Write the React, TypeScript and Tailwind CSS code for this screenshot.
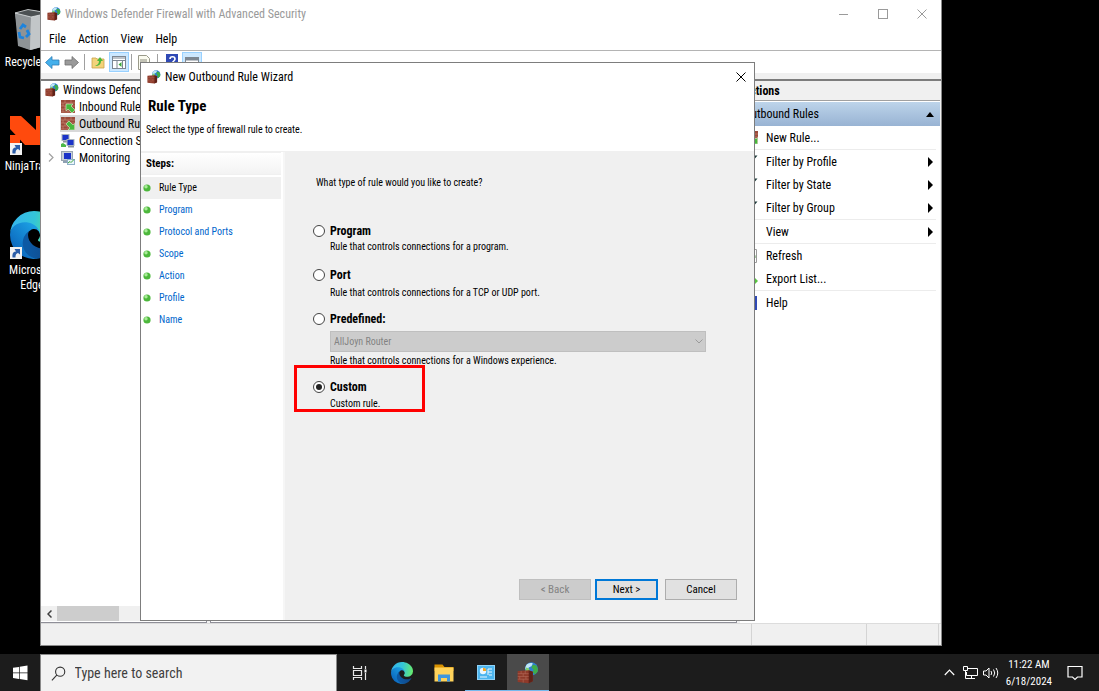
// App.tsx — Windows desktop with the firewall console and the outbound rule wizard
// Console window, wizard dialog and taskbar, each built from small pieces below

import React, { useState } from 'react'

// --- Data ---

const steps = ['Rule Type', 'Program', 'Protocol and Ports', 'Scope', 'Action', 'Profile', 'Name']

const menus = ['File', 'Action', 'View', 'Help']

type RuleKind = 'program' | 'port' | 'predefined' | 'custom'

// --- Icons ---

function FirewallIcon({ className = 'size-4' }: { className?: string }) {
  return (
    <svg viewBox="0 0 32 32" className={className} aria-hidden="true">
      <circle cx="21" cy="10" r="9.5" fill="#2f7fd0" />
      <path d="M15 3c3-2 6-2 8-1l-2 4-4 2-1 4-4-2c0-3 1-5 3-7z" fill="#bfe6f5" />
      <path d="M23 4l5 1c2 3 3 6 2 9l-4 4-3-3 1-4-3-3z" fill="#3fae49" />
      <path d="M13 8l4 1 2 4-3 4-4-3z" fill="#7fd06a" />
      <path d="M1 13l16-1 6 2v14l-6 3L1 29z" fill="#8f3a2a" />
      <path d="M17 12l6 2v14l-6 3z" fill="#5f2218" />
      <path d="M1 17h16M1 21h16M1 25h16M6 13v4M12 13v4M9 17v4M4 21v4M13 21v4M9 25v5" stroke="#b5705f" strokeWidth="0.8" fill="none" />
    </svg>
  )
}

function BrickRuleIcon({ direction }: { direction: 'in' | 'out' }) {
  return (
    <svg viewBox="0 0 14 13" className="w-[14px] h-[13px] shrink-0" aria-hidden="true">
      <rect width="14" height="13" fill="#9a4a3a" />
      <path d="M0 3h14M0 6h14M0 9h14M0 12h14M4 0v3M10 0v3M2 3v3M7 3v3M4 6v3M2 9v3M7 9v3" stroke="#c98a7a" strokeWidth="0.6" />
      {direction === 'in' ? (
        <path d="M5 4h7l-2 2 4 4-3 3-4-4-2 2z" fill="#47b83c" stroke="#d8f5cf" strokeWidth="0.6" />
      ) : (
        <path d="M13.500 13H7l2-2-4-4 3-3 4 4 1.500-1.500z" fill="#47b83c" stroke="#d8f5cf" strokeWidth="0.6" />
      )}
    </svg>
  )
}

function ComputersIcon() {
  return (
    <svg viewBox="0 0 14 14" className="size-[14px] shrink-0" aria-hidden="true">
      <rect x="1" y="0.5" width="7" height="6" fill="#1b34c8" stroke="#a9b3bd" />
      <rect x="2" y="7" width="5" height="1.5" fill="#8a949d" />
      <rect x="6" y="5.5" width="7" height="6" fill="#1b34c8" stroke="#a9b3bd" />
      <rect x="7" y="12" width="6" height="1.5" fill="#8a949d" />
      <path d="M0 13v-3l2-1 3 2v2z" fill="#4db848" />
    </svg>
  )
}

function MonitorIcon() {
  return (
    <svg viewBox="0 0 14 14" className="size-[14px] shrink-0" aria-hidden="true">
      <rect x="0.5" y="0.5" width="11" height="9" fill="#c6d0da" stroke="#9aa6b2" />
      <rect x="3" y="2" width="7" height="6" fill="#1b34c8" />
      <rect x="2" y="10" width="8" height="2" fill="#8fa0b3" />
      <rect x="6.5" y="8.5" width="7" height="5" fill="#eaf4fb" stroke="#8fb0c8" />
      <path d="M7 12l2-1.500 1 1 3-3" stroke="#3ba53a" fill="none" />
    </svg>
  )
}

function EdgeIcon({ id, className }: { id: string; className: string }) {
  return (
    <svg viewBox="0 0 256 256" className={className} aria-hidden="true">
      <defs>
        <linearGradient id={`${id}-a`} x1="0.2" y1="0.5" x2="0.9" y2="0.5">
          <stop offset="0" stopColor="#0c59a4" />
          <stop offset="1" stopColor="#114a8b" />
        </linearGradient>
        <linearGradient id={`${id}-b`} x1="0.9" y1="0.3" x2="0.3" y2="1">
          <stop offset="0" stopColor="#1b9de2" />
          <stop offset="1" stopColor="#0a63ba" />
        </linearGradient>
        <linearGradient id={`${id}-c`} x1="0" y1="0.4" x2="1" y2="0.5">
          <stop offset="0" stopColor="#35b4ee" />
          <stop offset="0.5" stopColor="#34c5d8" />
          <stop offset="1" stopColor="#66eb6e" />
        </linearGradient>
      </defs>
      <path fill={`url(#${id}-a)`} d="M231 190.500a93.700 93.700 0 0 1-10.500 4.700 101.900 101.900 0 0 1-35.900 6.500c-47.300 0-88.500-32.600-88.500-74.300a31.500 31.500 0 0 1 16.400-27.300c-42.800 1.800-53.800 46.400-53.800 72.500 0 74 68.100 81.400 82.800 81.400 7.900 0 19.800-2.300 27-4.600l1.300-.4a128.300 128.300 0 0 0 66.600-52.800 4 4 0 0 0-5.400-5.700z" />
      <path fill={`url(#${id}-b)`} d="M105.700 241.400a79.200 79.200 0 0 1-22.700-21.300 80.700 80.700 0 0 1 29.500-120c3.200-1.500 8.500-4.100 15.600-4a32.400 32.400 0 0 1 25.700 13 31.900 31.900 0 0 1 6.300 18.700c0-.2 24.500-79.600-80-79.600-43.900 0-80 41.700-80 78.200a130.200 130.200 0 0 0 12.100 56 128 128 0 0 0 156.400 67 75.500 75.500 0 0 1-62.800-8z" />
      <path fill={`url(#${id}-c)`} d="M152.300 148.900c-.9 1-3.400 2.500-3.400 5.600 0 2.600 1.700 5.200 4.800 7.300 14.300 10 41.400 8.600 41.500 8.600a59.600 59.600 0 0 0 30.300-8.300 61.400 61.400 0 0 0 30.400-52.900c.3-22.400-8-37.300-11.300-43.900C223.500 23.900 177.700 0 128 0A128 128 0 0 0 0 126.200c.5-36.500 36.800-66 80-66 3.500 0 23.500.3 42 10 16.300 8.600 24.900 18.900 30.800 29.200 6.200 10.700 7.300 24.100 7.300 29.500 0 5.300-2.700 13.300-7.800 20z" />
    </svg>
  )
}

function RecycleBinIcon() {
  return (
    <svg viewBox="0 0 36 42" className="h-[42px] w-9" aria-hidden="true">
      <path d="M1 4l17-3 17 3-4 33-14 4-11-4z" fill="#a8adb0" />
      <path d="M1 4l16 4-1 33-12-4z" fill="#8e9396" />
      <path d="M17 8l18-4-4 33-15 4z" fill="#c2c6c8" />
      <path d="M1 4l13-3.500L35 4l-18 4z" fill="#4c5153" stroke="#dfe3e5" strokeWidth="0.8" />
      <path d="M6 20l3-4 3 2M5 23l1 5 4 1M12 28l3-3-2-4" stroke="#1d83dc" strokeWidth="2.800" fill="none" />
    </svg>
  )
}

function NinjaIcon() {
  return (
    <svg viewBox="0 0 44 40" className="h-10 w-11" aria-hidden="true">
      <path d="M0 1h11l15 14V1h14v29H15L0 14z" fill="#ff4a0d" />
      <path d="M0 20h7l3 3v7H0z" fill="#ff4a0d" />
    </svg>
  )
}

function ShortcutArrow() {
  return (
    <svg viewBox="0 0 12 12" className="absolute bottom-0 left-0 size-3" aria-hidden="true">
      <rect width="12" height="12" fill="#f2f2f2" />
      <path d="M2.500 10.500C2 6 3.500 4.500 6 4.500L4.500 2H10v5.500L8 6C6 6.500 5.500 8 5.500 10.500z" fill="#2b5da8" />
    </svg>
  )
}

function ArrowIcon({ flip = false, fill }: { flip?: boolean; fill: string }) {
  return (
    <svg viewBox="0 0 15 13" className="h-[13px] w-[15px]" aria-hidden="true">
      <path
        d={flip ? 'M14.500 6.500L8 0.500v3.500H1v5h7v3.500z' : 'M0.500 6.500L7 0.500v3.500h7v5H7v3.500z'}
        fill={fill}
        stroke={flip ? '#6f6f6f' : '#2d7fb8'}
        strokeWidth="0.8"
      />
    </svg>
  )
}

function CloseIcon({ className }: { className: string }) {
  return (
    <svg viewBox="0 0 10 10" className={className} aria-hidden="true">
      <path d="M0.500 0.500l9 9M9.500 0.500l-9 9" stroke="currentColor" fill="none" />
    </svg>
  )
}

// --- Desktop ---

function DesktopIcon({ label, children }: { label: string; children: React.ReactNode }) {
  return (
    <button className="flex w-16 flex-col items-center gap-1 text-[12px] leading-[15px] text-white">
      <span className="relative flex h-12 w-full items-end justify-center">{children}</span>
      <span className="px-1">{label}</span>
    </button>
  )
}

function Desktop() {
  return (
    <div className="flex flex-col items-start gap-[37px] pt-[3px]">
      <DesktopIcon label="Recycle Bin">
        <RecycleBinIcon />
      </DesktopIcon>
      <DesktopIcon label="NinjaTrader">
        <span className="relative">
          <NinjaIcon />
          <ShortcutArrow />
        </span>
      </DesktopIcon>
      <DesktopIcon label="Microsoft Edge">
        <span className="relative ml-1">
          <EdgeIcon id="desk" className="size-12" />
          <ShortcutArrow />
        </span>
      </DesktopIcon>
    </div>
  )
}

// --- Console window ---

function Toolbar() {
  return (
    <div className="flex h-[22px] items-center pl-1">
      <button aria-label="Back"><ArrowIcon fill="#44b0ec" /></button>
      <button aria-label="Forward" className="ml-1"><ArrowIcon flip fill="#9a9a9a" /></button>
      <span className="ml-[5px] h-4 w-px bg-[#a0a0a0]" />
      <button aria-label="Up one level" className="ml-[6px]">
        <svg viewBox="0 0 14 14" className="size-[14px]" aria-hidden="true">
          <path d="M1 3h4l1 1h7v9H1z" fill="#f3d37a" stroke="#c9a24a" strokeWidth="0.8" />
          <path d="M4 11c3-1 4-3 4-5H6l3-4 3 4h-2c0 3-2 5-6 5z" fill="#4bb83a" />
        </svg>
      </button>
      <button aria-label="Show or hide console tree" className="ml-1 flex h-5 w-5 items-center justify-center border border-[#99d1ff] bg-[#cce8ff]">
        <svg viewBox="0 0 14 13" className="h-[13px] w-[14px]" aria-hidden="true">
          <rect x="0.500" y="0.500" width="13" height="12" fill="#fff" stroke="#7d8792" />
          <path d="M1 2h12M1 4.500h12M5 5v7M10.500 5v7" stroke="#7d8792" />
          <path d="M9.500 6v5L6.500 8.500z" fill="#3aa83a" />
        </svg>
      </button>
      <span className="ml-[2px] h-4 w-px bg-[#a0a0a0]" />
      <button aria-label="Export" className="ml-[6px]">
        <svg viewBox="0 0 12 15" className="h-[15px] w-3" aria-hidden="true">
          <path d="M0.500 0.500h8l3 3v11h-11z" fill="#fbfbf0" stroke="#9a9a8a" />
          <path d="M2 5h7M2 7h7M2 9h7" stroke="#8a8a7a" />
        </svg>
      </button>
      <span className="ml-[7px] h-4 w-px bg-[#a0a0a0]" />
      <button aria-label="Help" className="ml-2">
        <svg viewBox="0 0 12 16" className="h-4 w-3" aria-hidden="true">
          <rect width="12" height="16" fill="#2f49b5" />
          <path d="M4 5c0-3 5-3 5 0 0 2-2.500 2-2.500 4M6.500 11v2" stroke="#fff" strokeWidth="1.600" fill="none" />
        </svg>
      </button>
      <button aria-label="Show or hide action pane" className="ml-1 flex h-5 w-5 items-center justify-center border border-[#99d1ff] bg-[#cce8ff]">
        <svg viewBox="0 0 14 10" className="h-[10px] w-[14px]" aria-hidden="true">
          <rect x="0.500" y="0.500" width="13" height="9" fill="#fff" stroke="#7d8792" />
          <path d="M1 2h12" stroke="#7d8792" strokeWidth="3" />
        </svg>
      </button>
    </div>
  )
}

function TreeItem({ icon, label, selected = false, expandable = false }: { icon: React.ReactNode; label: string; selected?: boolean; expandable?: boolean }) {
  return (
    <li className="flex h-[17px] items-center">
      <span className="flex w-[19px] shrink-0 justify-center">
        {expandable && (
          <svg viewBox="0 0 6 9" className="h-[9px] w-[6px]" aria-hidden="true">
            <path d="M1 0.500l4 4-4 4" stroke="#a0a0a0" strokeWidth="1.200" fill="none" />
          </svg>
        )}
      </span>
      <button className={`flex h-full flex-1 items-center gap-1 whitespace-nowrap pl-px ${selected ? 'bg-[#d9d9d9]' : ''}`}>
        {icon}
        {label}
      </button>
    </li>
  )
}

function ConsoleTree() {
  return (
    <nav className="flex w-[166px] shrink-0 flex-col overflow-hidden border-r border-b border-[#8f8f98] bg-white" aria-label="Console tree">
      <button className="flex h-[17px] items-center gap-1 pl-1 whitespace-nowrap">
        <FirewallIcon className="size-[14px] shrink-0" />
        Windows Defender Firewall
      </button>
      <ul className="flex-1">
        <TreeItem icon={<BrickRuleIcon direction="in" />} label="Inbound Rules" />
        <TreeItem icon={<BrickRuleIcon direction="out" />} label="Outbound Rules" selected />
        <TreeItem icon={<ComputersIcon />} label="Connection Security Rules" />
        <TreeItem icon={<MonitorIcon />} label="Monitoring" expandable />
      </ul>
      <div className="mb-px flex h-[15px] items-center bg-[#f0f0f0]">
        <button aria-label="Scroll left" className="flex w-4 justify-center">
          <svg viewBox="0 0 5 8" className="h-2 w-[5px]" aria-hidden="true">
            <path d="M4.500 0.500L1 4l3.500 3.500" stroke="#404040" strokeWidth="1.500" fill="none" />
          </svg>
        </button>
        <span className="h-full w-[62px] bg-[#cdcdcd]" />
      </div>
    </nav>
  )
}

function ActionItem({ label, icon, submenu = false }: { label: string; icon?: React.ReactNode; submenu?: boolean }) {
  return (
    <li>
      <button className="flex h-[23px] w-full items-center pr-[3px] text-left">
        <span className="mr-2 flex w-[14px] justify-end">{icon}</span>
        <span className="flex-1">{label}</span>
        {submenu && (
          <svg viewBox="0 0 5 10" className="h-[10px] w-[5px]" aria-hidden="true">
            <path d="M0 0v10l5-5z" fill="#000" />
          </svg>
        )}
      </button>
    </li>
  )
}

function FilterIcon() {
  return (
    <svg viewBox="0 0 14 14" className="size-[14px]" aria-hidden="true">
      <path d="M0 0.500h13.500L8 7v6H6V7z" fill="#1d3b3b" />
    </svg>
  )
}

function ActionsPane() {
  const group = 'mr-1 border-b border-[#ececec]'
  return (
    <aside className="flex w-[200px] shrink-0 flex-col bg-white" aria-label="Actions">
      <h2 className="flex h-5 items-center border-b border-[#a0a0a0] bg-[#f0f0f0] pl-[3px] font-bold">Actions</h2>
      <button className="mt-px flex h-[24px] items-center justify-between bg-linear-to-b from-[#bdd4ea] to-[#98b3d3] pr-[6px] pl-1">
        Outbound Rules
        <svg viewBox="0 0 8 5" className="h-[5px] w-2" aria-hidden="true">
          <path d="M0 5h8L4 0z" fill="#000" />
        </svg>
      </button>
      <div className="pl-1">
        <ul className={group}>
          <ActionItem label="New Rule..." icon={<BrickRuleIcon direction="out" />} />
        </ul>
        <ul className={group}>
          <ActionItem label="Filter by Profile" icon={<FilterIcon />} submenu />
          <ActionItem label="Filter by State" icon={<FilterIcon />} submenu />
          <ActionItem label="Filter by Group" icon={<FilterIcon />} submenu />
        </ul>
        <ul className={group}>
          <ActionItem label="View" submenu />
        </ul>
        <ul className={group}>
          <ActionItem
            label="Refresh"
            icon={
              <svg viewBox="0 0 12 14" className="h-[14px] w-3" aria-hidden="true">
                <path d="M0.500 0.500h10v13h-10z" fill="#fff" stroke="#9a9a9a" />
                <path d="M3 7a3 3 0 0 1 6 0v2" stroke="#5a9e4e" fill="none" />
              </svg>
            }
          />
          <ActionItem
            label="Export List..."
            icon={
              <svg viewBox="0 0 14 14" className="size-[14px]" aria-hidden="true">
                <path d="M0.500 0.500h9v13h-9z" fill="#fffdf0" stroke="#9a9a8a" />
                <path d="M5 7h5V5l4 4-4 4v-2H5z" fill="#58c440" />
              </svg>
            }
          />
        </ul>
        <ul className="mr-1">
          <ActionItem
            label="Help"
            icon={
              <svg viewBox="0 0 13 14" className="h-[14px] w-[13px]" aria-hidden="true">
                <rect width="12" height="14" fill="#2f49b5" />
                <path d="M4 4c0-3 5-2 5 0 0 2-2.500 2-2.500 4M6.500 10v2" stroke="#fff" fill="none" />
              </svg>
            }
          />
        </ul>
      </div>
    </aside>
  )
}

function ConsoleWindow() {
  return (
    <section
      className="absolute top-0 right-[157px] bottom-2 left-10 flex flex-col border-x border-b border-[#8a8a8a] bg-[#f0f0f0]"
      aria-label="Windows Defender Firewall with Advanced Security"
    >
      <div className="bg-white">
        <header className="flex h-7 items-center pl-[6px] text-[#9a9a9a]">
          <FirewallIcon className="size-[14px]" />
          <h1 className="ml-1 flex-1">Windows Defender Firewall with Advanced Security</h1>
          <button aria-label="Minimize" className="flex w-[39px] justify-center">
            <span className="h-px w-[9px] bg-[#9a9a9a]" />
          </button>
          <button aria-label="Maximize" className="flex w-[39px] justify-center">
            <span className="size-[10px] border border-[#9a9a9a]" />
          </button>
          <button aria-label="Close" className="flex w-[39px] justify-center">
            <CloseIcon className="size-[10px]" />
          </button>
        </header>
        <nav className="flex h-[23px] items-center gap-3 border-b border-[#b4b4b4] pl-2" aria-label="Menu bar">
          {menus.map((menu) => (
            <button key={menu}>{menu}</button>
          ))}
        </nav>
        <Toolbar />
      </div>

      <div className="mt-[6px] flex min-h-0 flex-1 gap-[3px] border-t-2 border-[#7c7c7c] pr-px">
        <ConsoleTree />
        <div className="flex-1 border border-t-0 border-[#8f8f98] bg-white" />
        <ActionsPane />
      </div>

      <footer className="flex h-[22px] justify-end border-t border-[#dcdcdc]">
        <span className="w-[115px] border-l border-[#d4d4d4]" />
        <span className="w-[73px] border-x border-[#d4d4d4]" />
        <span className="w-[2px]" />
      </footer>
    </section>
  )
}

// --- Wizard ---

function StepDot() {
  return (
    <svg viewBox="0 0 8 8" className="size-2" aria-hidden="true">
      <circle cx="4" cy="4" r="3.600" fill="#4db83c" />
      <circle cx="3" cy="2.800" r="1.700" fill="#a9ec98" />
    </svg>
  )
}

function StepList() {
  return (
    <nav className="w-[144px] shrink-0 border-r-2 border-[#f6f6f6] bg-white pr-[2px]" aria-label="Steps">
      <h3 className="flex h-[23px] items-center border-y border-[#f0f0f0] bg-linear-to-b from-white to-[#f3f3f3] pl-[5px] text-[11px] font-bold">Steps:</h3>
      <ol className="mt-[2px]">
        {steps.map((step, index) => (
          <li key={step}>
            {index === 0 ? (
              <span className="flex h-[22px] items-center gap-2 bg-[#f0f0f0] pl-[2px]" aria-current="step">
                <StepDot />
                {step}
              </span>
            ) : (
              <a href={`#step-${index}`} className="flex h-[22px] items-center gap-2 pl-[2px] text-[#0066cc]">
                <StepDot />
                {step}
              </a>
            )}
          </li>
        ))}
      </ol>
    </nav>
  )
}

interface RuleOptionProps {
  kind:     RuleKind
  label:    string
  checked:  boolean
  onSelect: (kind: RuleKind) => void
}

function RuleOption({ kind, label, checked, onSelect }: RuleOptionProps) {
  return (
    <label className="flex h-4 items-center gap-[5px] text-[12px] font-bold">
      <input
        type="radio"
        name="rule-kind"
        checked={checked}
        onChange={() => onSelect(kind)}
        className="grid size-3 appearance-none place-content-center rounded-full border border-[#444] bg-white checked:before:size-[6px] checked:before:rounded-full checked:before:bg-[#222] checked:before:content-['']"
      />
      {label}
    </label>
  )
}

function WizardDialog() {
  const [kind, setKind] = useState<RuleKind>('custom')

  return (
    <section
      role="dialog"
      aria-label="New Outbound Rule Wizard"
      className="absolute top-[62px] right-[344px] bottom-[33px] left-[140px] flex flex-col border border-[#7d7d7d] bg-white text-[10px] leading-4"
    >
      <header className="flex h-7 items-center pr-2 pl-[6px] text-[12px]">
        <FirewallIcon className="size-[14px]" />
        <span className="ml-1 flex-1">New Outbound Rule Wizard</span>
        <button aria-label="Close"><CloseIcon className="size-[10px]" /></button>
      </header>

      <div className="flex h-[61px] flex-col gap-2 border-b border-[#f0f0f0] pt-[7px] pl-[5px]">
        <h2 className="pl-[2px] text-[15px] font-bold">Rule Type</h2>
        <p>Select the type of firewall rule to create.</p>
      </div>

      <div className="flex min-h-0 flex-1">
        <StepList />

        <form className="flex flex-1 flex-col bg-[#f0f0f0] pt-[23px] pr-[17px] pb-5 pl-7" onSubmit={(e) => e.preventDefault()}>
          <p className="pl-[3px]">What type of rule would you like to create?</p>

          <div className="mt-8">
            <RuleOption kind="program" label="Program" checked={kind === 'program'} onSelect={setKind} />
            <p className="pl-[17px]">Rule that controls connections for a program.</p>
          </div>

          <div className="mt-3 flex flex-col gap-[2px]">
            <RuleOption kind="port" label="Port" checked={kind === 'port'} onSelect={setKind} />
            <p className="pl-[17px]">Rule that controls connections for a TCP or UDP port.</p>
          </div>

          <div className="mt-[10px]">
            <RuleOption kind="predefined" label="Predefined:" checked={kind === 'predefined'} onSelect={setKind} />
            <div className="relative mt-1 mr-[31px] ml-[17px]">
              <select
                disabled={kind !== 'predefined'}
                aria-label="Predefined rule"
                className="block h-[21px] w-full appearance-none border border-[#bfbfbf] bg-[#cccccc] pl-[3px] text-[#838383] opacity-100"
              >
                <option>AllJoyn Router</option>
              </select>
              <svg viewBox="0 0 8 5" className="pointer-events-none absolute top-2 right-[3px] h-[5px] w-2" aria-hidden="true">
                <path d="M0.500 0.500L4 4l3.500-3.500" stroke="#9a9a9a" fill="none" />
              </svg>
            </div>
            <p className="mt-px pl-[17px]">Rule that controls connections for a Windows experience.</p>
          </div>

          <div className="relative mt-[10px]">
            <RuleOption kind="custom" label="Custom" checked={kind === 'custom'} onSelect={setKind} />
            <p className="mt-px pl-[17px]">Custom rule.</p>
            {/* Highlight frame around the option to pick */}
            <div className="pointer-events-none absolute -top-[14px] -left-[19px] h-[47px] w-[131px] border-3 border-[#ff0000]" />
          </div>

          <div className="mt-auto flex justify-end text-[11px]">
            <button type="button" disabled className="h-[21px] w-[72px] border border-[#bfbfbf] bg-[#cccccc] text-[#838383]">&lt; Back</button>
            <button type="submit" className="ml-1 h-[21px] w-[63px] border-2 border-[#0078d7] bg-[#e1e1e1] leading-none">Next &gt;</button>
            <button type="button" className="ml-[7px] h-[21px] w-[72px] border border-[#adadad] bg-[#e1e1e1]">Cancel</button>
          </div>
        </form>
      </div>
    </section>
  )
}

// --- Taskbar ---

function TaskButton({ label, state = 'idle', children }: { label: string; state?: 'idle' | 'open' | 'active'; children: React.ReactNode }) {
  const look = {
    idle:   'border-transparent',
    open:   'border-[#76b9ed]',
    active: 'border-[#76b9ed] bg-[#4a4a4a]',
  }[state]
  return (
    <button aria-label={label} className={`flex h-full w-[42px] items-center justify-center border-b pt-px ${look}`}>
      {children}
    </button>
  )
}

function Taskbar() {
  return (
    <footer className="flex h-[37px] shrink-0 items-center bg-[#1c1c1c] text-white">
      <button aria-label="Start" className="flex h-full w-10 items-center justify-center">
        <svg viewBox="0 0 16 16" className="size-4" aria-hidden="true">
          <path d="M1 2.800l6-.9v5.700H1zM7.700 1.800L15.500.6v7H7.700zM1 8.300h6V14l-6-.9zM7.700 8.300h7.800v7l-7.800-1.200z" fill="#fff" />
        </svg>
      </button>
      <label className="flex h-full w-[297px] items-center gap-2 border border-b-0 border-[#8a8a8a] bg-[#f2f2f2] pl-[10px]">
        <svg viewBox="0 0 17 17" className="size-[17px]" aria-hidden="true">
          <circle cx="10" cy="6.500" r="5" stroke="#333" strokeWidth="1.200" fill="none" />
          <path d="M6.500 10L1 16" stroke="#333" strokeWidth="1.200" />
        </svg>
        <input
          type="text"
          placeholder="Type here to search"
          aria-label="Search"
          className="w-full bg-transparent text-[14px] outline-none placeholder:text-[#3f3f3f]"
        />
      </label>
      <div className="flex h-full flex-1 pl-[2px]">
        <TaskButton label="Task View">
          <svg viewBox="0 0 16 16" className="size-4" aria-hidden="true">
            <path d="M1.500 1v2.500h8V1M1.500 15v-2.500h8V15M1.500 5.500h8v5h-8zM13.500 1v3M13.500 8v7" stroke="#e8e8e8" strokeWidth="1.200" fill="none" />
            <rect x="12.500" y="4.500" width="2" height="3" fill="#fff" />
          </svg>
        </TaskButton>
        <TaskButton label="Microsoft Edge"><EdgeIcon id="bar" className="size-[22px]" /></TaskButton>
        <TaskButton label="File Explorer">
          <svg viewBox="0 0 20 18" className="h-[18px] w-5" aria-hidden="true">
            <path d="M0.500 0.500h8l2 2.500h9v4h-19z" fill="#d99200" />
            <path d="M0.500 3.500h19v14h-19z" fill="#ffd35b" />
            <path d="M4 17.500v-7h12v7h-3v-3.500H7v3.500z" fill="#3f97dd" />
          </svg>
        </TaskButton>
        <TaskButton label="Control Panel" state="open">
          <svg viewBox="0 0 18 15" className="h-[15px] w-[18px]" aria-hidden="true">
            <rect x="0.500" y="0.500" width="17" height="14" fill="#4db5ee" stroke="#8fd3f8" />
            <circle cx="6" cy="6" r="3.200" fill="#eaf7ff" />
            <path d="M6 6V2.800A3.200 3.200 0 0 1 9.200 6z" fill="#f5a623" />
            <path d="M3 12h7M11 4h4M11 7h4M12 10h3M11 4v6" stroke="#eaf7ff" fill="none" />
          </svg>
        </TaskButton>
        <TaskButton label="Windows Defender Firewall" state="active"><FirewallIcon className="size-[22px]" /></TaskButton>
      </div>
      <div className="flex items-center pr-4">
        <button aria-label="Show hidden icons">
          <svg viewBox="0 0 11 7" className="h-[7px] w-[11px]" aria-hidden="true">
            <path d="M0.800 6L5.500 1.200 10.200 6" stroke="#fff" strokeWidth="1.200" fill="none" />
          </svg>
        </button>
        <button aria-label="Network" className="ml-2">
          <svg viewBox="0 0 15 13" className="h-[13px] w-[15px]" aria-hidden="true">
            <path d="M5 2.500h9.500v7H3.500V6M8.500 10v2M5 12.500h7M0.500 0.500h4v4h-4zM2.500 5v7.500H5" stroke="#fff" fill="none" />
          </svg>
        </button>
        <button aria-label="Volume" className="ml-[5px]">
          <svg viewBox="0 0 16 12" className="h-3 w-4" aria-hidden="true">
            <path d="M0.500 4h2.500l3-3v10L3 8H0.500zM8 4q1.500 2 0 4M10.500 2.500q2.500 3.500 0 7M13 1q3.500 5 0 10" stroke="#fff" fill="none" />
          </svg>
        </button>
        <time className="ml-[7px] flex flex-col items-center text-[11px] leading-[17px]">
          <span>11:22 AM</span>
          <span>6/18/2024</span>
        </time>
        <button aria-label="Notifications" className="ml-[15px]">
          <svg viewBox="0 0 16 16" className="size-4" aria-hidden="true">
            <path d="M1 1.500h14v10.500h-4.500L8 14.500 5.500 12H1z" stroke="#fff" strokeWidth="1.200" fill="none" />
          </svg>
        </button>
      </div>
    </footer>
  )
}

export default function App() {
  return (
    <div className="flex h-screen flex-col overflow-hidden bg-black font-['Roboto_Condensed','Roboto','Open_Sans',sans-serif] text-[12px] leading-4 text-black">
      <main className="relative flex-1">
        <Desktop />
        <ConsoleWindow />
        <WizardDialog />
      </main>
      <Taskbar />
    </div>
  )
}
